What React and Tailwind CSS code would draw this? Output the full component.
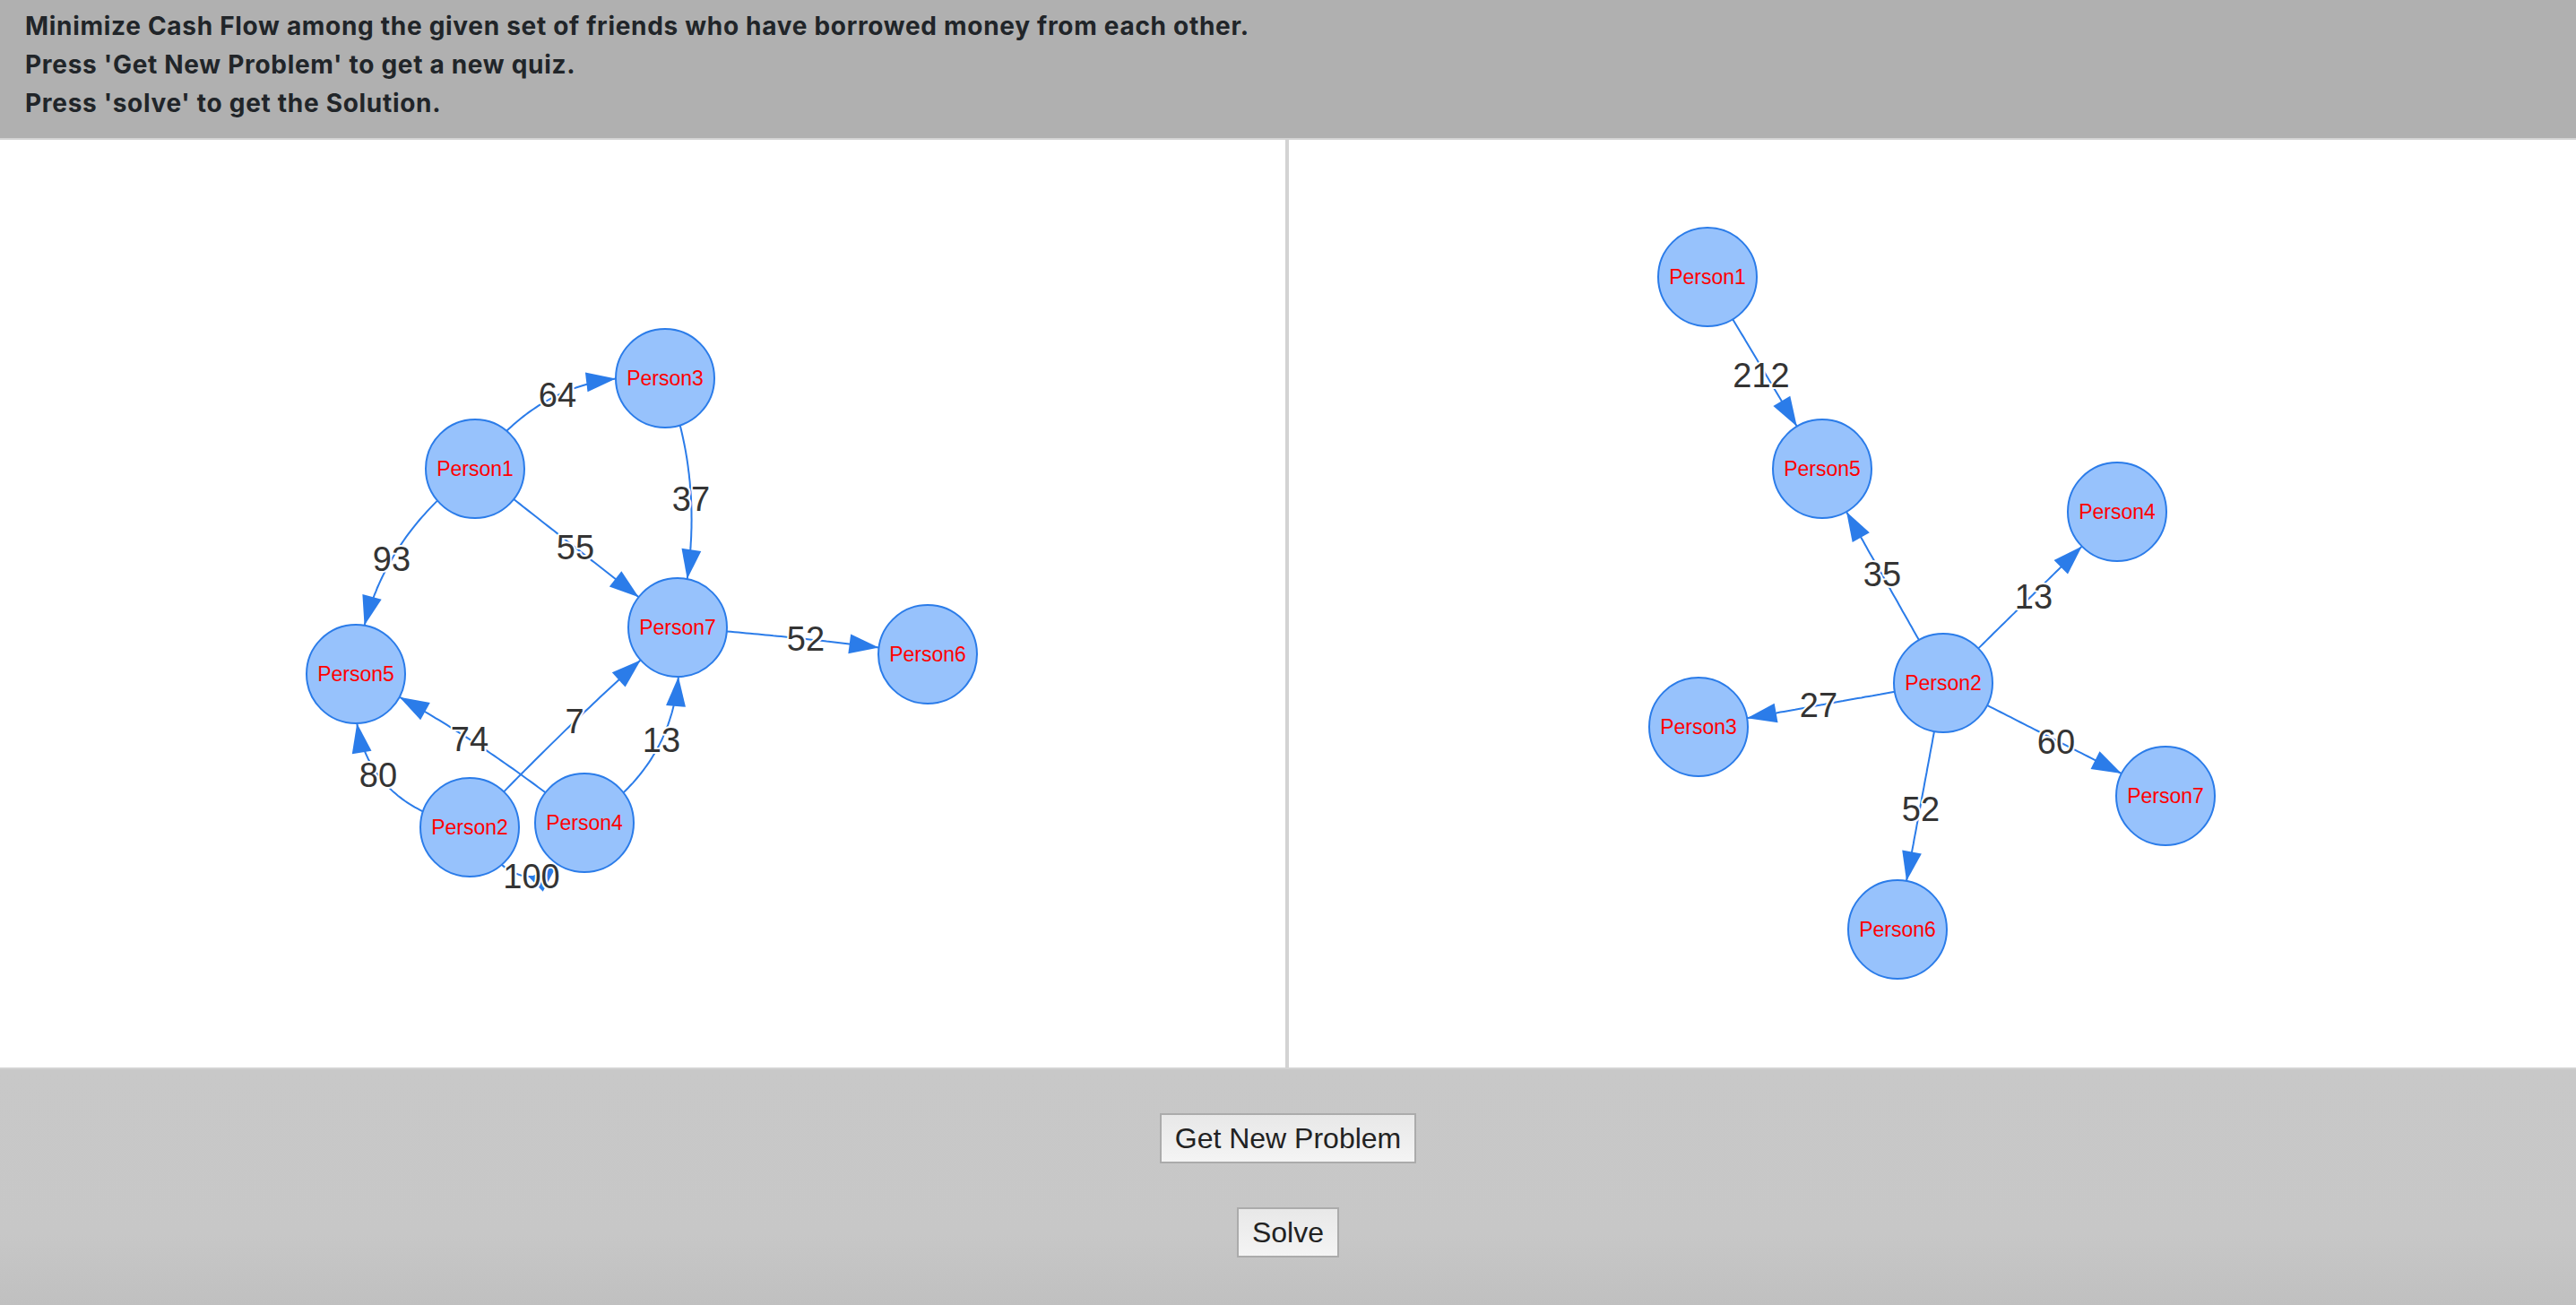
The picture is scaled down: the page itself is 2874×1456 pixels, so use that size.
import React from 'react';

const R = 55;
const ARROW_LEN = 33;
const ARROW_HALF = 11;
const BLUE = '#2b7ce9';

// left panel: the problem graph (page coordinates)
const problemNodes = {
    Person1: { x: 530, y: 523 },
    Person3: { x: 742, y: 422 },
    Person7: { x: 756, y: 700 },
    Person6: { x: 1035, y: 730 },
    Person5: { x: 397, y: 752 },
    Person2: { x: 524, y: 923 },
    Person4: { x: 652, y: 918 },
};

const problemEdges = [
    { from: 'Person1', to: 'Person3', label: '64', at: { x: 622, y: 441 } },
    { from: 'Person3', to: 'Person7', label: '37', at: { x: 771, y: 557 } },
    { from: 'Person1', to: 'Person7', label: '55', at: { x: 642, y: 611 } },
    { from: 'Person1', to: 'Person5', label: '93', at: { x: 437, y: 624 } },
    { from: 'Person7', to: 'Person6', label: '52', at: { x: 899, y: 713 } },
    { from: 'Person4', to: 'Person5', label: '74', at: { x: 524, y: 825 } },
    { from: 'Person2', to: 'Person7', label: '7', at: { x: 641, y: 805 } },
    { from: 'Person4', to: 'Person7', label: '13', at: { x: 738, y: 826 } },
    { from: 'Person2', to: 'Person5', label: '80', at: { x: 422, y: 865 } },
    { from: 'Person2', to: 'Person4', label: '100', at: { x: 593, y: 978 } },
];

// right panel: the solution graph
const solutionNodes = {
    Person1: { x: 1905, y: 309 },
    Person5: { x: 2033, y: 523 },
    Person4: { x: 2362, y: 571 },
    Person2: { x: 2168, y: 762 },
    Person3: { x: 1895, y: 811 },
    Person7: { x: 2416, y: 888 },
    Person6: { x: 2117, y: 1037 },
};

const solutionEdges = [
    { from: 'Person1', to: 'Person5', label: '212', at: { x: 1965, y: 419 }, straight: true },
    { from: 'Person2', to: 'Person5', label: '35', at: { x: 2100, y: 641 }, straight: true },
    { from: 'Person2', to: 'Person4', label: '13', at: { x: 2269, y: 666 }, straight: true },
    { from: 'Person2', to: 'Person3', label: '27', at: { x: 2029, y: 787 }, straight: true },
    { from: 'Person2', to: 'Person7', label: '60', at: { x: 2294, y: 828 }, straight: true },
    { from: 'Person2', to: 'Person6', label: '52', at: { x: 2143, y: 903 }, straight: true },
];

const quad = (a, c, b, t) => {
    const u = 1 - t;
    return {
        x: u * u * a.x + 2 * u * t * c.x + t * t * b.x,
        y: u * u * a.y + 2 * u * t * c.y + t * t * b.y,
    };
};

const dist = (p, q) => Math.hypot(p.x - q.x, p.y - q.y);

// find t where the curve crosses the circle around `center`
function crossing(a, c, b, center, outward) {
    let lo = 0;
    let hi = 1;
    for (let i = 0; i < 40; i++) {
        const mid = (lo + hi) / 2;
        const inside = dist(quad(a, c, b, mid), center) < R;
        if (outward ? inside : !inside) lo = mid;
        else hi = mid;
    }
    return (lo + hi) / 2;
}

function Edge({ nodes, edge }) {
    const a = nodes[edge.from];
    const b = nodes[edge.to];
    const m = { x: (a.x + b.x) / 2, y: (a.y + b.y) / 2 };
    const c = edge.straight ? m : { x: 2 * edge.at.x - m.x, y: 2 * edge.at.y - m.y };

    const t0 = crossing(a, c, b, a, true);
    const t1 = crossing(a, c, b, b, false);

    const pts = [];
    for (let i = 0; i <= 40; i++) {
        pts.push(quad(a, c, b, t0 + ((t1 - t0) * i) / 40));
    }
    const d = pts.map((p, i) => `${i ? 'L' : 'M'}${p.x.toFixed(1)} ${p.y.toFixed(1)}`).join(' ');

    const tip = quad(a, c, b, t1);
    const dx = 2 * (1 - t1) * (c.x - a.x) + 2 * t1 * (b.x - c.x);
    const dy = 2 * (1 - t1) * (c.y - a.y) + 2 * t1 * (b.y - c.y);
    const len = Math.hypot(dx, dy);
    const ux = dx / len;
    const uy = dy / len;
    const bx = tip.x - ux * ARROW_LEN;
    const by = tip.y - uy * ARROW_LEN;
    const arrow = `${tip.x},${tip.y} ${bx - uy * ARROW_HALF},${by + ux * ARROW_HALF} ${bx + uy * ARROW_HALF},${by - ux * ARROW_HALF}`;

    return (
        <g>
            <path d={d} fill="none" stroke={BLUE} strokeWidth="2" />
            <polygon points={arrow} fill={BLUE} />
            <text
                x={edge.at.x}
                y={edge.at.y}
                textAnchor="middle"
                dominantBaseline="central"
                fontFamily="'Liberation Sans', Arial, sans-serif"
                fontSize="38"
                fill="#343434"
                stroke="#ffffff"
                strokeWidth="4"
                strokeLinejoin="round"
                paintOrder="stroke"
            >
                {edge.label}
            </text>
        </g>
    );
}

function Graph({ nodes, edges, viewBox, width }) {
    return (
        <svg width={width} height="1035" viewBox={viewBox} className="block">
            {edges.map((e) => (
                <Edge key={e.from + e.to} nodes={nodes} edge={e} />
            ))}
            {Object.entries(nodes).map(([name, p]) => (
                <g key={name}>
                    <circle cx={p.x} cy={p.y} r={R} fill="#97c2fc" stroke={BLUE} strokeWidth="2" />
                    <text
                        x={p.x}
                        y={p.y}
                        textAnchor="middle"
                        dominantBaseline="central"
                        fontFamily="'Liberation Sans', Arial, sans-serif"
                        fontSize="23"
                        fill="#ff0000"
                    >
                        {name}
                    </text>
                </g>
            ))}
        </svg>
    );
}

function PanelButton({ children }) {
    return (
        <button className="h-[56px] px-[15px] flex items-center border-2 border-[#ababab] bg-linear-to-b from-[#e8e8e8] to-[#f4f4f4] text-[32px] leading-none text-[#222222] font-['Liberation_Sans',Arial,sans-serif]">
            {children}
        </button>
    );
}

export default function App() {
    return (
        <div className="h-screen flex flex-col bg-[#c8c8c8]">
            {/* Instructions */}
            <div className="h-[154px] shrink-0 bg-[#b0b0b0] px-[28px] pt-[8px] text-[28px] leading-[43px] tracking-[0.7px] font-bold text-[#212529] font-['Inter',sans-serif]">
                <p>Minimize Cash Flow among the given set of friends who have borrowed money from each other.</p>
                <p>Press 'Get New Problem' to get a new quiz.</p>
                <p>Press 'solve' to get the Solution.</p>
            </div>

            {/* Problem / solution canvases */}
            <div className="h-[1039px] shrink-0 flex border-y-2 border-[#d3d3d3]">
                <div className="w-[1434px] bg-white overflow-hidden">
                    <Graph nodes={problemNodes} edges={problemEdges} viewBox="0 156 1434 1035" width="1434" />
                </div>
                <div className="w-[4px] bg-[#d3d3d3]"></div>
                <div className="flex-1 bg-white overflow-hidden">
                    <Graph nodes={solutionNodes} edges={solutionEdges} viewBox="1438 156 1436 1035" width="1436" />
                </div>
            </div>

            {/* Controls */}
            <div className="flex-1 flex flex-col items-center pt-[49px] gap-[49px] bg-linear-to-b from-[#c8c8c8] via-[#c7c7c7] via-70% to-[#c0c0c0]">
                <PanelButton>Get New Problem</PanelButton>
                <PanelButton>Solve</PanelButton>
            </div>
        </div>
    );
}
